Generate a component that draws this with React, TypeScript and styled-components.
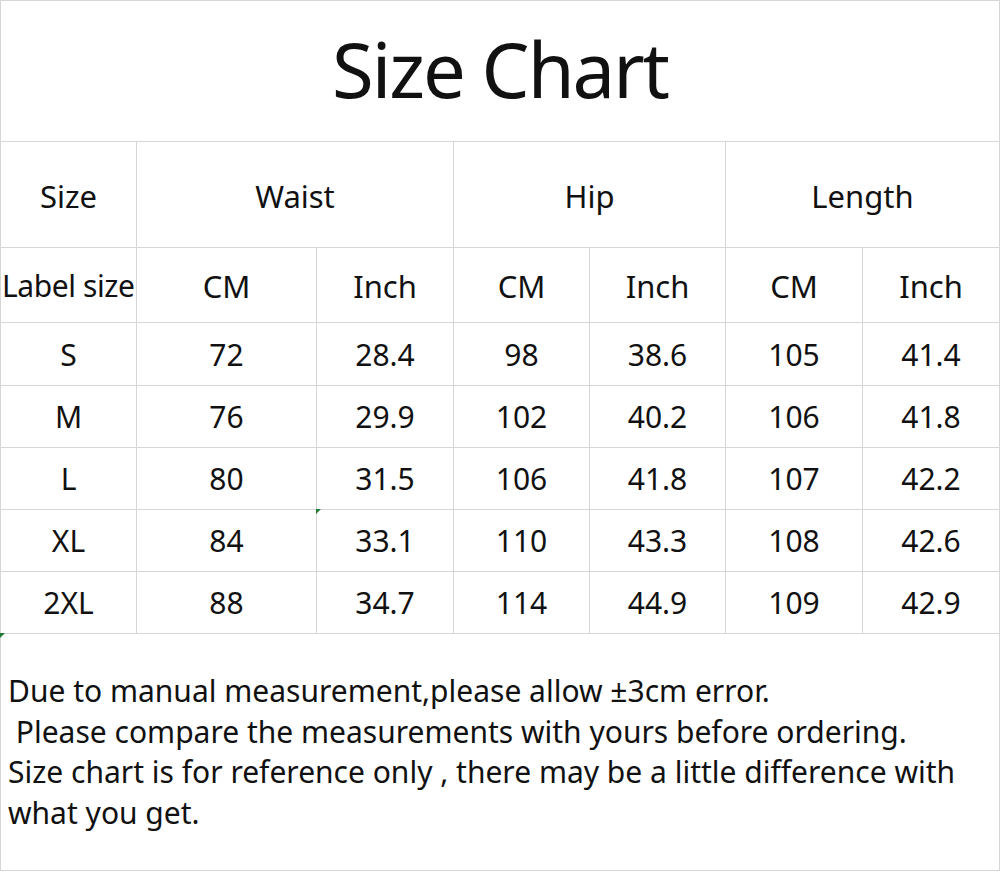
import React from "react";
import styled, { createGlobalStyle } from "styled-components";

const GlobalStyle = createGlobalStyle`
  html, body {
    margin: 0;
    padding: 0;
    background: #ffffff;
  }
  body {
    font-family: "Noto Sans", "Open Sans", sans-serif;
    color: #111111;
  }
`;

const LINE = "#d6d6d6";

const Sheet = styled.div`
  width: 1000px;
  height: 871px;
  box-sizing: border-box;
  border-top: 1px solid ${LINE};
  border-left: 1px solid ${LINE};
  display: grid;
  grid-template-columns: 136px 180px 137px 136px 136px 137px 137px;
  grid-template-rows: 141px 106px 75px 63px 62px 62px 62px 62px 1fr;
`;

const Cell = styled.div<{ $span?: number; $marker?: boolean }>`
  position: relative;
  box-sizing: border-box;
  border-right: 1px solid ${LINE};
  border-bottom: 1px solid ${LINE};
  grid-column: span ${(p) => p.$span ?? 1};
  display: flex;
  align-items: center;
  justify-content: center;
  font-size: 30px;
  white-space: nowrap;
  overflow: visible;
  ${(p) =>
    p.$marker &&
    `
    &::before {
      content: "";
      position: absolute;
      left: -1px;
      top: -1px;
      border-top: 5px solid #1e7b34;
      border-right: 5px solid transparent;
    }
  `}
`;

const Title = styled(Cell)`
  font-size: 76px;
  letter-spacing: -2px;
  padding-bottom: 6px;
`;

const HeadCell = styled(Cell)`
  font-size: 31px;
  padding-top: 2px;
`;

const LabelCell = styled(Cell)`
  justify-content: flex-start;
  padding-left: 1px;
  letter-spacing: -0.4px;
`;

const Notes = styled(Cell)`
  grid-column: 1 / -1;
  flex-direction: column;
  align-items: flex-start;
  justify-content: flex-start;
  padding: 37px 0 0 7px;
  font-size: 30px;
  line-height: 40.5px;
  white-space: pre;
`;

const rows = [
  ["S", "72", "28.4", "98", "38.6", "105", "41.4"],
  ["M", "76", "29.9", "102", "40.2", "106", "41.8"],
  ["L", "80", "31.5", "106", "41.8", "107", "42.2"],
  ["XL", "84", "33.1", "110", "43.3", "108", "42.6"],
  ["2XL", "88", "34.7", "114", "44.9", "109", "42.9"],
];

const notes = [
  "Due to manual measurement,please allow \u00b13cm error.",
  " Please compare the measurements with yours before ordering.",
  "Size chart is for reference only , there may be a little difference with",
  "what you get.",
];

export default function App() {
  return (
    <>
      <GlobalStyle />
      <Sheet>
        <Title $span={7}>Size Chart</Title>

        <HeadCell>Size</HeadCell>
        <HeadCell $span={2}>Waist</HeadCell>
        <HeadCell $span={2}>Hip</HeadCell>
        <HeadCell $span={2}>Length</HeadCell>

        <LabelCell>Label size</LabelCell>
        {["CM", "Inch", "CM", "Inch", "CM", "Inch"].map((h, i) => (
          <HeadCell key={i}>{h}</HeadCell>
        ))}

        {rows.map((r, ri) =>
          r.map((v, ci) => (
            <Cell key={`${ri}-${ci}`} $marker={ri === 3 && ci === 2}>
              {v}
            </Cell>
          ))
        )}

        <Notes $marker>
          {notes.map((n, i) => (
            <div key={i}>{n}</div>
          ))}
        </Notes>
      </Sheet>
    </>
  );
}
